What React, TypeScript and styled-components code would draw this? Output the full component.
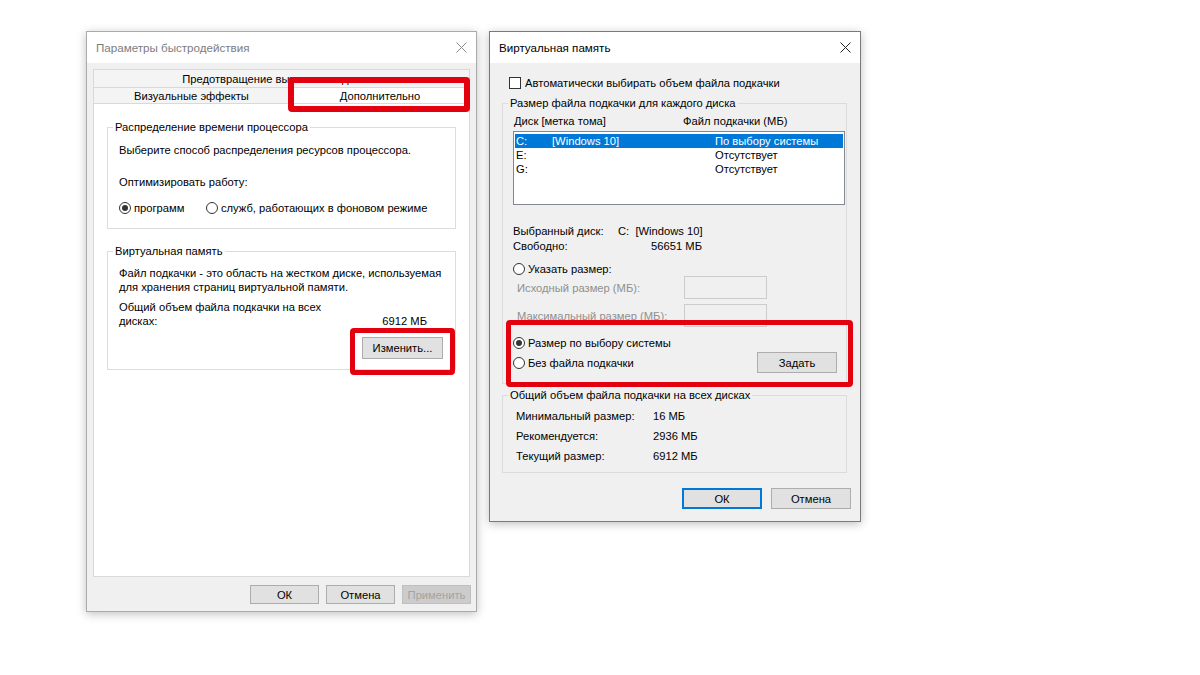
import React from 'react';
import styled, { createGlobalStyle } from 'styled-components';

const FONT_SIZE = '11.2px';

const GlobalStyle = createGlobalStyle`
    html, body {
        margin: 0;
        padding: 0;
        background: #ffffff;
    }
    body {
        font-family: 'Liberation Sans', Arial, sans-serif;
        font-size: ${FONT_SIZE};
        color: #000000;
    }
`;

const Desktop = styled.div`
    position: relative;
    width: 1200px;
    height: 675px;
    background: #ffffff;
    overflow: hidden;
`;

const Window = styled.div<{ $x: number; $y: number; $w: number; $h: number; $active?: boolean }>`
    position: absolute;
    left: ${p => p.$x}px;
    top: ${p => p.$y}px;
    width: ${p => p.$w}px;
    height: ${p => p.$h}px;
    box-sizing: border-box;
    display: flex;
    flex-direction: column;
    background: #f0f0f0;
    border: 1px solid ${p => (p.$active ? '#7a7a7a' : '#ababab')};
    box-shadow: 0 2px 9px rgba(0, 0, 0, 0.25);
`;

const TitleBar = styled.div<{ $active?: boolean }>`
    flex: none;
    height: 31px;
    display: flex;
    align-items: center;
    justify-content: space-between;
    padding: 0 9px 0 9px;
    background: #ffffff;
    font-size: 11.6px;
    color: ${p => (p.$active ? '#000000' : '#7d7d7d')};
`;

const CloseIcon = ({ color }: { color: string }) => (
    <svg width="11" height="11" viewBox="0 0 11 11">
        <path d="M0.5 0.5 L10.5 10.5 M10.5 0.5 L0.5 10.5" stroke={color} strokeWidth="1" fill="none" />
    </svg>
);

const Highlight = styled.div<{ $x: number; $y: number; $w: number; $h: number; $t: number }>`
    position: absolute;
    left: ${p => p.$x}px;
    top: ${p => p.$y}px;
    width: ${p => p.$w}px;
    height: ${p => p.$h}px;
    box-sizing: border-box;
    border: ${p => p.$t}px solid #e3000f;
    border-radius: 4px;
    pointer-events: none;
    z-index: 5;
`;

/* ---------- left dialog ---------- */

const LeftBody = styled.div`
    flex: 1;
    display: flex;
    flex-direction: column;
    padding: 6px 6px 7px 6px;
`;

const TabStrip = styled.div`
    flex: 1;
    display: flex;
    flex-direction: column;
`;

const TabRow = styled.div<{ $h: number }>`
    display: flex;
    height: ${p => p.$h}px;
`;

const Tab = styled.div<{ $w?: number; $selected?: boolean }>`
    ${p => (p.$w ? `width: ${p.$w}px;` : 'flex: 1;')}
    box-sizing: border-box;
    display: flex;
    align-items: center;
    justify-content: center;
    border: 1px solid #d9d9d9;
    border-bottom: none;
    background: ${p => (p.$selected ? '#ffffff' : '#f4f4f4')};
    white-space: nowrap;
    overflow: hidden;
`;

const TabPanel = styled.div`
    flex: 1;
    display: flex;
    flex-direction: column;
    gap: 15px;
    background: #ffffff;
    border: 1px solid #d9d9d9;
    padding: 16px 13px 0 13px;
`;

const GroupBox = styled.fieldset<{ $gap?: number }>`
    margin: ${p => p.$gap ?? 0}px 0 0 0;
    padding: 0;
    min-width: 0;
    border: 1px solid #dcdcdc;
`;

const Caption = styled.legend`
    margin-left: 5px;
    padding: 0 2px;
    line-height: 14px;
`;

const GroupBody = styled.div<{ $pad: string }>`
    display: flex;
    flex-direction: column;
    padding: ${p => p.$pad};
`;

const Line = styled.div<{ $top?: number }>`
    margin-top: ${p => p.$top ?? 0}px;
    line-height: 14px;
    white-space: nowrap;
`;

const RadioRow = styled.div<{ $top?: number }>`
    display: flex;
    align-items: center;
    margin-top: ${p => p.$top ?? 0}px;
    line-height: 14px;
`;

const RadioOption = styled.div<{ $w?: number }>`
    display: flex;
    align-items: center;
    gap: 3px;
    ${p => (p.$w ? `width: ${p.$w}px;` : '')}
    white-space: nowrap;
`;

const RadioMark = styled.span<{ $checked?: boolean }>`
    position: relative;
    width: 12px;
    height: 12px;
    box-sizing: border-box;
    border-radius: 50%;
    border: 1px solid #333333;
    background: #ffffff;
    flex: none;
    &::after {
        content: '';
        display: ${p => (p.$checked ? 'block' : 'none')};
        position: absolute;
        left: 2px;
        top: 2px;
        width: 6px;
        height: 6px;
        border-radius: 50%;
        background: #333333;
    }
`;

const Radio = ({ label, checked, w }: { label: string; checked?: boolean; w?: number }) => (
    <RadioOption $w={w}>
        <RadioMark $checked={checked} />
        <span>{label}</span>
    </RadioOption>
);

const TotalRow = styled.div`
    display: flex;
    justify-content: space-between;
    align-items: flex-end;
    margin-top: 6px;
    padding-right: 28px;
    line-height: 14px;
`;

const Button = styled.button<{ $w: number; $h: number; $default?: boolean; $disabled?: boolean }>`
    width: ${p => p.$w}px;
    height: ${p => p.$h}px;
    box-sizing: border-box;
    padding: 0;
    font-family: inherit;
    font-size: ${FONT_SIZE};
    color: ${p => (p.$disabled ? '#a3a3a3' : '#000000')};
    background: ${p => (p.$disabled ? '#cccccc' : '#e1e1e1')};
    border: ${p => (p.$default ? '2px solid #0078d7' : `1px solid ${p.$disabled ? '#bfbfbf' : '#adadad'}`)};
    border-radius: 0;
`;

const ButtonLine = styled.div<{ $top: number; $gap: number; $right?: number }>`
    display: flex;
    justify-content: flex-end;
    gap: ${p => p.$gap}px;
    margin-top: ${p => p.$top}px;
    margin-right: ${p => p.$right ?? 0}px;
`;

const GroupButton = styled.div`
    display: flex;
    justify-content: flex-end;
    margin-top: 9px;
    padding-right: 12px;
`;

/* ---------- right dialog ---------- */

const RightBody = styled.div`
    display: flex;
    flex-direction: column;
    padding: 13px 13px 12px 12px;
`;

const CheckRow = styled.div`
    display: flex;
    align-items: center;
    gap: 4px;
    margin-left: 7px;
    line-height: 14px;
`;

const CheckMark = styled.span`
    width: 12px;
    height: 12px;
    box-sizing: border-box;
    border: 1px solid #333333;
    background: #ffffff;
`;

const HeaderRow = styled.div`
    display: grid;
    grid-template-columns: 169px auto;
    padding-left: 1px;
    line-height: 14px;
`;

const ListBox = styled.div`
    margin-top: 3px;
    height: 74px;
    box-sizing: border-box;
    background: #ffffff;
    border: 1px solid #828790;
    padding: 2px 1px;
`;

const DriveRow = styled.div<{ $selected?: boolean }>`
    display: grid;
    grid-template-columns: 36px 163px auto;
    padding-left: 1px;
    height: 14px;
    line-height: 14px;
    background: ${p => (p.$selected ? '#0078d7' : 'transparent')};
    color: ${p => (p.$selected ? '#ffffff' : '#000000')};
    white-space: nowrap;
`;

const InfoGrid = styled.div<{ $cols: string; $top: number; $rowGap: number }>`
    display: grid;
    grid-template-columns: ${p => p.$cols};
    row-gap: ${p => p.$rowGap}px;
    margin-top: ${p => p.$top}px;
    line-height: 14px;
    white-space: nowrap;
`;

const Value = styled.span<{ $right?: boolean }>`
    text-align: ${p => (p.$right ? 'right' : 'left')};
`;

const SizeRow = styled.div<{ $top: number }>`
    display: grid;
    grid-template-columns: 167px 83px;
    align-items: center;
    margin-top: ${p => p.$top}px;
    padding-left: 4px;
    color: #8f8f8f;
    white-space: nowrap;
`;

const SizeInput = styled.div`
    height: 23px;
    box-sizing: border-box;
    border: 1px solid #cccccc;
    background: #f0f0f0;
`;

const SetRow = styled.div`
    display: flex;
    align-items: center;
    justify-content: space-between;
    margin-top: 2px;
    padding-right: 8px;
`;

const drives = [
    { letter: 'C:', label: '[Windows 10]', size: 'По выбору системы', selected: true },
    { letter: 'E:', label: '', size: 'Отсутствует' },
    { letter: 'G:', label: '', size: 'Отсутствует' },
];

const PerformanceOptions = () => (
    <Window $x={86} $y={31} $w={391} $h={581}>
        <TitleBar>
            <span>Параметры быстродействия</span>
            <CloseIcon color="#8a8a8a" />
        </TitleBar>
        <LeftBody>
            <TabStrip>
                <TabRow $h={18}>
                    <Tab>Предотвращение выполнения данных</Tab>
                </TabRow>
                <TabRow $h={16}>
                    <Tab $w={197}>Визуальные эффекты</Tab>
                    <Tab $selected>Дополнительно</Tab>
                </TabRow>
                <TabPanel>
                    <GroupBox>
                        <Caption>Распределение времени процессора</Caption>
                        <GroupBody $pad="9px 0 13px 11px">
                            <Line>Выберите способ распределения ресурсов процессора.</Line>
                            <Line $top={18}>Оптимизировать работу:</Line>
                            <RadioRow $top={12}>
                                <Radio label="программ" checked w={87} />
                                <Radio label="служб, работающих в фоновом режиме" />
                            </RadioRow>
                        </GroupBody>
                    </GroupBox>
                    <GroupBox>
                        <Caption>Виртуальная память</Caption>
                        <GroupBody $pad="8px 0 10px 11px">
                            <Line>Файл подкачки - это область на жестком диске, используемая</Line>
                            <Line>для хранения страниц виртуальной памяти.</Line>
                            <TotalRow>
                                <span>
                                    Общий объем файла подкачки на всех
                                    <br />
                                    дисках:
                                </span>
                                <span>6912 МБ</span>
                            </TotalRow>
                            <GroupButton>
                                <Button $w={81} $h={22}>Изменить...</Button>
                            </GroupButton>
                        </GroupBody>
                    </GroupBox>
                </TabPanel>
            </TabStrip>
            <ButtonLine $top={8} $gap={7} $right={-1}>
                <Button $w={69} $h={19}>ОК</Button>
                <Button $w={69} $h={19}>Отмена</Button>
                <Button $w={69} $h={19} $disabled>Применить</Button>
            </ButtonLine>
        </LeftBody>
        <Highlight $x={201} $y={45} $w={182} $h={35} $t={6} />
        <Highlight $x={263} $y={296} $w={105} $h={47} $t={5} />
    </Window>
);

const VirtualMemory = () => (
    <Window $x={489} $y={31} $w={372} $h={491} $active>
        <TitleBar $active>
            <span>Виртуальная память</span>
            <CloseIcon color="#222222" />
        </TitleBar>
        <RightBody>
            <CheckRow>
                <CheckMark />
                <span>Автоматически выбирать объем файла подкачки</span>
            </CheckRow>
            <GroupBox $gap={6}>
                <Caption>Размер файла подкачки для каждого диска</Caption>
                <GroupBody $pad="4px 1px 10px 10px">
                    <HeaderRow>
                        <span>Диск [метка тома]</span>
                        <span>Файл подкачки (МБ)</span>
                    </HeaderRow>
                    <ListBox>
                        {drives.map(d => (
                            <DriveRow key={d.letter} $selected={d.selected}>
                                <span>{d.letter}</span>
                                <span>{d.label}</span>
                                <span>{d.size}</span>
                            </DriveRow>
                        ))}
                    </ListBox>
                    <InfoGrid $cols="105px 84px" $top={19} $rowGap={1}>
                        <span>Выбранный диск:</span>
                        <Value $right>C:&nbsp; [Windows 10]</Value>
                        <span>Свободно:</span>
                        <Value $right>56651 МБ</Value>
                    </InfoGrid>
                    <RadioRow $top={9}>
                        <Radio label="Указать размер:" />
                    </RadioRow>
                    <SizeRow $top={0}>
                        <span>Исходный размер (МБ):</span>
                        <SizeInput />
                    </SizeRow>
                    <SizeRow $top={5}>
                        <span>Максимальный размер (МБ):</span>
                        <SizeInput />
                    </SizeRow>
                    <RadioRow $top={9}>
                        <Radio label="Размер по выбору системы" checked />
                    </RadioRow>
                    <SetRow>
                        <Radio label="Без файла подкачки" />
                        <Button $w={80} $h={21}>Задать</Button>
                    </SetRow>
                </GroupBody>
            </GroupBox>
            <GroupBox $gap={4}>
                <Caption>Общий объем файла подкачки на всех дисках</Caption>
                <GroupBody $pad="7px 0 9px 13px">
                    <InfoGrid $cols="137px auto" $top={0} $rowGap={6}>
                        <span>Минимальный размер:</span>
                        <span>16 МБ</span>
                        <span>Рекомендуется:</span>
                        <span>2936 МБ</span>
                        <span>Текущий размер:</span>
                        <span>6912 МБ</span>
                    </InfoGrid>
                </GroupBody>
            </GroupBox>
            <ButtonLine $top={15} $gap={9} $right={-4}>
                <Button $w={80} $h={21} $default>ОК</Button>
                <Button $w={80} $h={21}>Отмена</Button>
            </ButtonLine>
        </RightBody>
        <Highlight $x={16} $y={288} $w={347} $h={67} $t={5} />
    </Window>
);

const App = () => (
    <>
        <GlobalStyle />
        <Desktop>
            <PerformanceOptions />
            <VirtualMemory />
        </Desktop>
    </>
);

export default App;
